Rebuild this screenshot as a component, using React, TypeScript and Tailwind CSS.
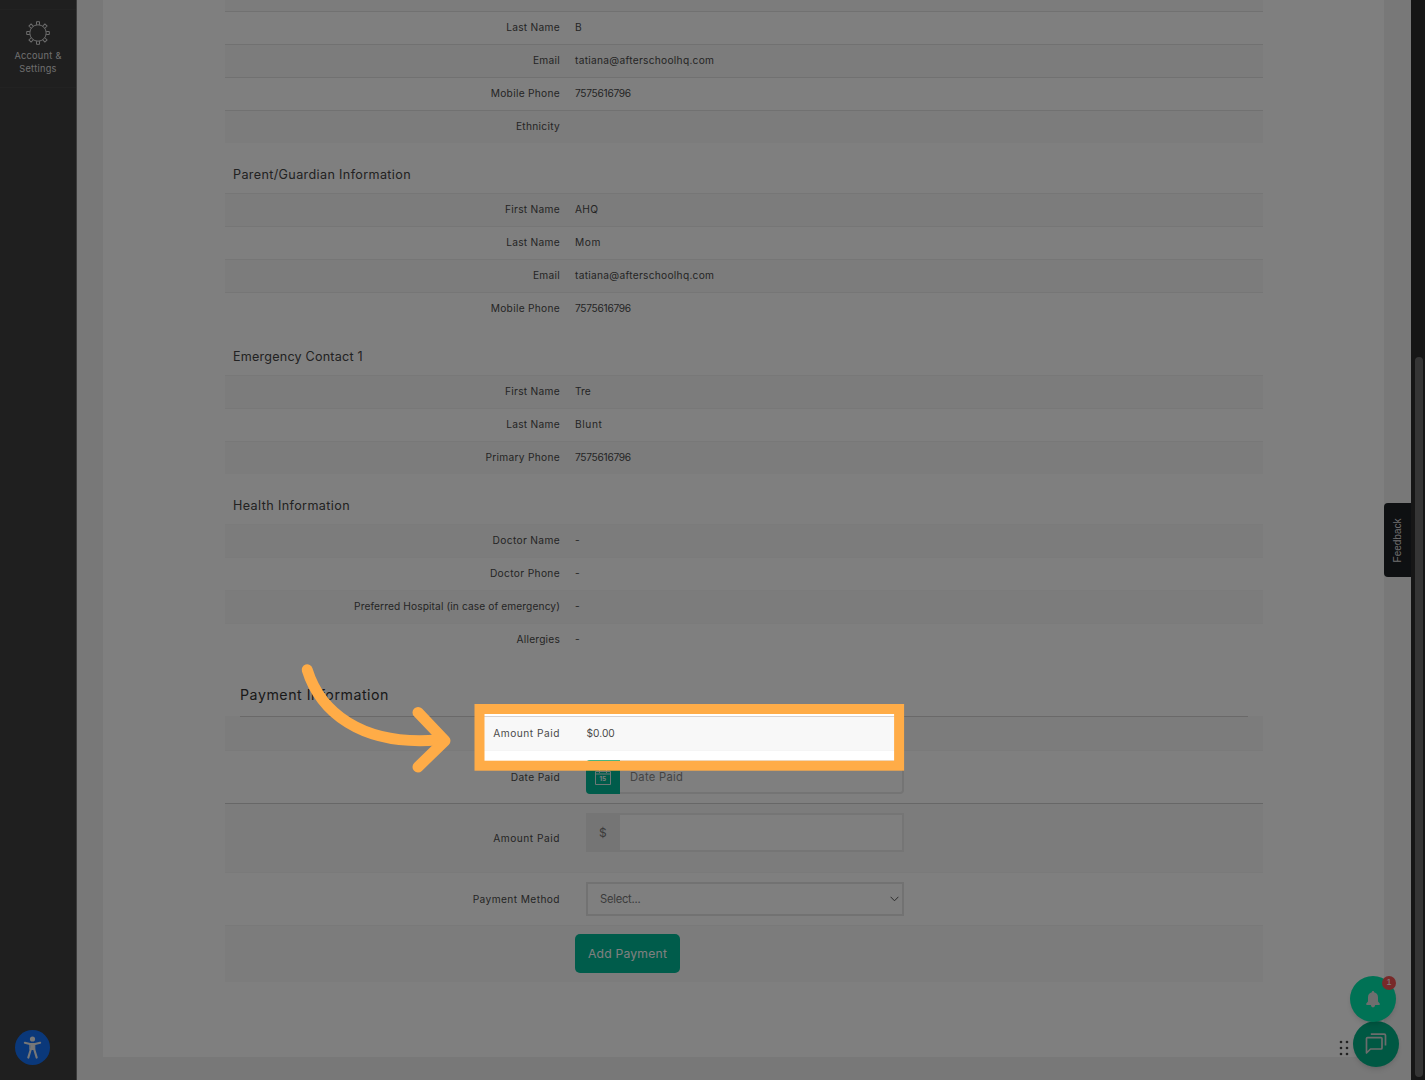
type Field = {
  label: string;
  value: string;
  labelClass?: string;
  valueClass?: string;
};

const studentFields: Field[] = [
  { label: "Last Name", value: "B" },
  { label: "Email", value: "tatiana@afterschoolhq.com" },
  { label: "Mobile Phone", value: "7575616796", valueClass: "tracking-[-0.3px]" },
  { label: "Ethnicity", value: "" },
];

const guardianFields: Field[] = [
  { label: "First Name", value: "AHQ" },
  { label: "Last Name", value: "Mom", valueClass: "tracking-[0.6px]" },
  { label: "Email", value: "tatiana@afterschoolhq.com" },
  { label: "Mobile Phone", value: "7575616796", valueClass: "tracking-[-0.3px]" },
];

const emergencyFields: Field[] = [
  { label: "First Name", value: "Tre", valueClass: "tracking-normal" },
  { label: "Last Name", value: "Blunt", valueClass: "tracking-[0.6px]" },
  { label: "Primary Phone", value: "7575616796", valueClass: "tracking-[-0.3px]" },
];

const healthFields: Field[] = [
  { label: "Doctor Name", value: "-", labelClass: "tracking-[0.35px]" },
  { label: "Doctor Phone", value: "-", labelClass: "tracking-[0.35px]" },
  { label: "Preferred Hospital (in case of emergency)", value: "-", labelClass: "tracking-[0.1px]" },
  { label: "Allergies", value: "-", labelClass: "tracking-[0.2px]" },
];

function FieldTable({ fields, startOdd = true, line = "border-[#ececec]" }: { fields: Field[]; startOdd?: boolean; line?: string }) {
  return (
    <div>
      {fields.map((field, i) => (
        <div
          key={field.label}
          className={`flex h-[33px] items-center border-t ${line} ${(i % 2 === 0) === startOdd ? "bg-[#f8f8f8]" : "bg-white"}`}
        >
          <div className={`w-[335px] shrink-0 text-right whitespace-nowrap ${field.labelClass ?? ""}`}>{field.label}</div>
          <div className={`pl-[15px] whitespace-nowrap ${field.valueClass ?? ""}`}>{field.value}</div>
        </div>
      ))}
    </div>
  );
}

function SectionTitle({ children, className }: { children: string; className: string }) {
  return (
    <h3 className={`flex h-[50px] items-center pt-[14px] pl-2 text-[12.6px] text-[#444] ${className}`}>{children}</h3>
  );
}

function GearIcon() {
  return (
    <svg className="size-6" viewBox="-12 -12 24 24" fill="none" stroke="#d8d8d8" strokeWidth="1">
      <circle r="8.2" />
      {[0, 45, 90, 135, 180, 225, 270, 315].map((a) => (
        <path key={a} d="M-1.5 -8.2V-11.3H1.5V-8.2" transform={`rotate(${a})`} />
      ))}
    </svg>
  );
}

function Sidebar() {
  return (
    <aside className="flex w-[77px] shrink-0 flex-col border-r border-[#777] bg-[#3e3e3e]">
      <div className="mt-[9px] flex h-[79px] flex-col items-center border-y border-[#444] pt-[11px] text-center text-[9.2px] leading-[13px] text-[#dedede]">
        <GearIcon />
        <span className="mt-[4px] tracking-[0.28px]">
          Account &amp;
          <br />
          Settings
        </span>
      </div>
      <button className="mt-auto mb-[15px] ml-[15px] flex size-[35px] items-center justify-center rounded-full bg-[#1470f5]">
        <svg className="size-[35px]" viewBox="0 0 35 35" fill="none" stroke="#eee" strokeLinecap="round" strokeLinejoin="round">
          <circle cx="17.5" cy="9" r="2.6" fill="#eee" stroke="none" />
          <path d="M9.8 12.7L15 14H20L25.2 12.7" strokeWidth="2" />
          <path d="M15.2 14H19.8V19.5H15.2Z" fill="#eee" strokeWidth="1" />
          <path d="M15.9 19L13.3 27.6M19.1 19L21.7 27.6" strokeWidth="2.1" />
        </svg>
      </button>
    </aside>
  );
}

function PaymentForm() {
  return (
    <div>
      <div className="relative flex h-[34px] items-center bg-[#f8f8f8] pt-px">
        <div className="absolute top-0 right-[15px] left-[15px] h-px bg-[#d5d2d3]" />
        <div className="w-[335px] text-right tracking-[0.5px]">Amount Paid</div>
        <div className="pl-[26.5px] tracking-normal">$0.00</div>
      </div>
      <div className="flex h-[53px] items-center border-t border-[#f5f5f5]">
        <div className="w-[335px] pt-px text-right tracking-[0.35px]">Date Paid</div>
        <div className="ml-[26px] flex h-[34px] w-[318px]">
          <div className="flex w-[34px] items-center justify-center rounded-l-[4px] bg-[#00b997]">
            <svg className="size-[16px]" viewBox="0 0 16 16" fill="none" stroke="#dcefeb">
              <path d="M.5 2.5H15.5V15.5H.5ZM.5 5H15.5M4.5 1V4M11.5 1V4" />
              <text x="8" y="12.4" textAnchor="middle" fill="#fff" stroke="none" className="font-[Inter,sans-serif] text-[6px] font-bold">
                15
              </text>
            </svg>
          </div>
          <div className="flex flex-1 items-center rounded-r-[4px] border-2 border-l-0 border-[#e8e8e8] bg-white pt-px pl-[10px] text-[11.2px] text-[#888]">
            Date Paid
          </div>
        </div>
      </div>
      <div className="flex h-[69px] items-start border-t border-[#cfcfcf] bg-[#f8f8f8]">
        <div className="w-[335px] pt-[27px] text-right tracking-[0.5px]">Amount Paid</div>
        <div className="mt-[9px] ml-[26px] flex h-[39px] w-[318px] border-2 border-[#ebebeb] bg-white">
          <div className="flex w-[32px] items-center justify-center bg-[#ebebeb] pr-[2px] text-[12px] text-[#777]">$</div>
        </div>
      </div>
      <div className="flex h-[53px] items-start border-t border-[#f5f5f5] pt-[9px]">
        <div className="flex h-[34px] w-[335px] items-center justify-end pt-px tracking-[0.4px]">Payment Method</div>
        <div className="ml-[26px] flex h-[34px] w-[318px] items-center justify-between border-2 border-[#e5e5e5] bg-white pr-[3px] pl-[12px] text-[11.2px] tracking-[-0.25px] text-[#777]">
          Select...
          <svg className="h-[6px] w-[9px]" viewBox="0 0 9 6" fill="none" stroke="#555">
            <path d="M.6 .8L4.5 4.8L8.4 .8" />
          </svg>
        </div>
      </div>
      <div className="flex h-[57px] items-start border-t border-[#f3f3f3] bg-[#f8f8f8] pl-[350px]">
        <button className="mt-2 h-[39px] w-[105px] rounded-[5px] bg-[#00b997] pt-px text-[12.2px] tracking-[0.2px] whitespace-nowrap text-white">
          Add Payment
        </button>
      </div>
    </div>
  );
}

function FloatingButtons() {
  return (
    <>
      <div className="absolute top-[503px] left-[1384px] flex h-[74px] w-[27px] items-center justify-center rounded-l-[4px] bg-[#1c2024]">
        <span className="-rotate-90 font-['Liberation_Sans',sans-serif] text-[10px] tracking-normal text-[#ddd]">Feedback</span>
      </div>
      <svg className="absolute top-[1040px] left-[1339px] h-4 w-[10px]" viewBox="0 0 10 16" fill="#444">
        {[2, 8].map((x) => [2, 8, 14].map((y) => <circle key={`${x}-${y}`} cx={x} cy={y} r="1.3" />))}
      </svg>
      <button className="absolute top-[1021px] left-[1353px] flex size-[46px] items-center justify-center rounded-full bg-[#00b086] shadow-md">
        <svg className="size-[22px]" viewBox="0 0 22 22" fill="none" stroke="#d8d8d8" strokeWidth="1.7" strokeLinejoin="round">
          <path d="M1.5 20V5.6Q1.5 4.6 2.5 4.6H16Q17 4.6 17 5.6V15Q17 16 16 16H5.5Z" />
          <path d="M5.8 1.2H19.2Q20.5 1.2 20.5 2.5V12.5" />
        </svg>
      </button>
      <button className="absolute top-[976px] left-[1350px] flex size-[46px] items-center justify-center rounded-full bg-[#00e5ab] shadow-md">
        <svg className="h-[17px] w-[14px]" viewBox="0 0 14 17" fill="#ddd">
          <path d="M7 0C7.7 0 8.1 .5 8.1 1.2C10.6 1.8 12 3.8 12 6.4V10.4L13.7 12.4Q14.2 14 13 14H9.2Q8.9 16.4 7 16.4Q5.1 16.4 4.8 14H1Q-.2 14 .3 12.4L2 10.4V6.4C2 3.8 3.4 1.8 5.9 1.2C5.9 .5 6.3 0 7 0Z" />
        </svg>
      </button>
      <div className="absolute top-[976px] left-[1382px] flex size-[14px] items-center justify-center rounded-full bg-[#f05252] font-['Liberation_Sans',sans-serif] text-[9px] tracking-normal text-white">
        1
      </div>
    </>
  );
}

// Dims the page around the highlighted field and points at it
function Spotlight() {
  return (
    <>
      <div className="absolute top-[709px] left-[479px] h-[57px] w-[420px] shadow-[0_0_0_1500px_rgba(0,0,0,0.5)]" />
      <svg className="absolute inset-0 h-[1080px] w-[1425px]" viewBox="0 0 1425 1080" fill="none" stroke="#ffac47">
        <rect x="479.5" y="709" width="419.6" height="56.7" strokeWidth="10" />
        <path d="M307.2 669.8C320 711 360 746 437 740" strokeWidth="11" strokeLinecap="round" />
        <path d="M418 712.4L445 740.7L418 767" strokeWidth="11" strokeLinecap="round" strokeLinejoin="round" />
      </svg>
    </>
  );
}

export default function App() {
  return (
    <div className="relative flex h-[1080px] w-[1425px] overflow-hidden bg-[#f1f1f1] font-[Inter,'Open_Sans',sans-serif] text-[10.2px] tracking-[0.28px] text-[#4a4a4a]">
      <Sidebar />

      <main className="flex-1 px-[26px] pr-[27px]">
        <div className="h-[1057px] bg-white px-[122px] pr-[121px]">
          <div className="h-[11px] bg-[#f8f8f8]" />
          <FieldTable fields={studentFields} startOdd={false} line="border-[#e2e2e2]" />

          <SectionTitle className="tracking-[0.36px]">Parent/Guardian Information</SectionTitle>
          <FieldTable fields={guardianFields} />

          <SectionTitle className="tracking-[0.2px]">Emergency Contact 1</SectionTitle>
          <FieldTable fields={emergencyFields} line="border-[#f0f0f0]" />

          <SectionTitle className="tracking-[0.38px]">Health Information</SectionTitle>
          <FieldTable fields={healthFields} line="border-[#f6f6f6]" />

          <h2 className="flex h-[60px] items-center pt-[18px] pl-[15px] text-[14.2px] tracking-[0.53px] text-[#333]">
            Payment Information
          </h2>
          <PaymentForm />
        </div>
      </main>

      <div className="flex w-[14px] shrink-0 justify-center bg-[#2c2c2c] pt-[357px] pl-[2px]">
        <div className="h-[720px] w-2 rounded-full bg-[#6b6b6b]" />
      </div>

      <FloatingButtons />
      <Spotlight />
    </div>
  );
}
